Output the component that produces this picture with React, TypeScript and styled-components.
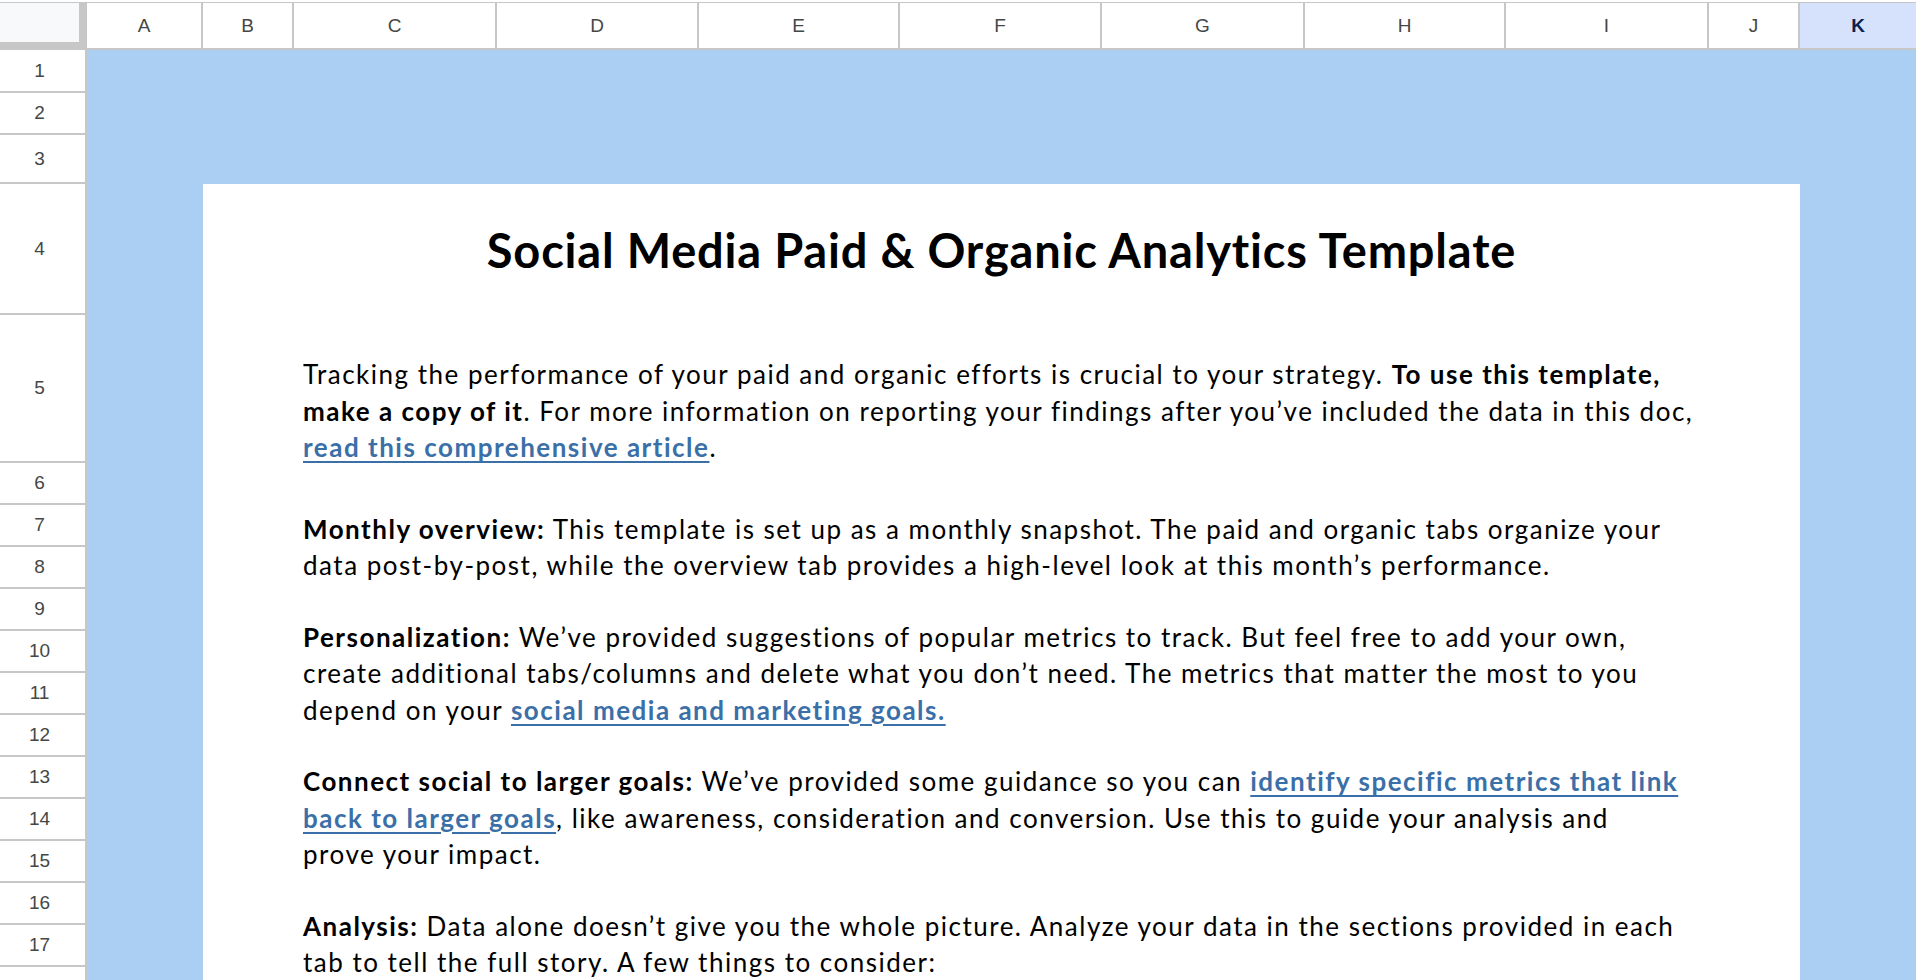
import React from "react"
import styled, { createGlobalStyle } from "styled-components"

type Column = { label: string; width: number; selected?: boolean }

const columns: Column[] = [
  { label: "A", width: 116 },
  { label: "B", width: 91 },
  { label: "C", width: 203 },
  { label: "D", width: 202 },
  { label: "E", width: 201 },
  { label: "F", width: 202 },
  { label: "G", width: 203 },
  { label: "H", width: 201 },
  { label: "I", width: 203 },
  { label: "J", width: 91 },
  { label: "K", width: 116, selected: true },
]

const rowHeights = [43, 42, 49, 131, 148, 42, 42, 42, 42, 42, 42, 42, 42, 42, 42, 42, 42, 42]

const App: React.FC = () => {
  return (
    <>
      <GlobalStyle />
      <Page>
        <HeaderRow>
          <Corner />
          {columns.map((col) => (
            <ColHeader key={col.label} $width={col.width} $selected={col.selected}>
              {col.label}
            </ColHeader>
          ))}
        </HeaderRow>
        <Body>
          <RowHeaders>
            {rowHeights.map((h, i) => (
              <RowHeader key={i} $height={h}>
                {i + 1}
              </RowHeader>
            ))}
          </RowHeaders>
          <Canvas>
            <Card>
              <Title>Social Media Paid &amp; Organic Analytics Template</Title>
              <Para $gap={41}>
                Tracking the performance of your paid and organic efforts is crucial to your strategy.{" "}
                <b>To use this template,</b>
                <br />
                <b>make a copy of it</b>. For more information on reporting your findings after you’ve included the data in this doc,
                <br />
                <Link href="#">read this comprehensive article</Link>.
              </Para>
              <Para $gap={45}>
                <b>Monthly overview:</b> This template is set up as a monthly snapshot. The paid and organic tabs organize your
                <br />
                data post-by-post, while the overview tab provides a high-level look at this month’s performance.
              </Para>
              <Para $gap={35}>
                <b>Personalization:</b> We’ve provided suggestions of popular metrics to track. But feel free to add your own,
                <br />
                create additional tabs/columns and delete what you don’t need. The metrics that matter the most to you
                <br />
                depend on your <Link href="#">social media and marketing goals.</Link>
              </Para>
              <Para $gap={35}>
                <b>Connect social to larger goals:</b> We’ve provided some guidance so you can{" "}
                <Link href="#">identify specific metrics that link</Link>
                <br />
                <Link href="#">back to larger goals</Link>, like awareness, consideration and conversion. Use this to guide your analysis and
                <br />
                prove your impact.
              </Para>
              <Para $gap={35}>
                <b>Analysis:</b> Data alone doesn’t give you the whole picture. Analyze your data in the sections provided in each
                <br />
                tab to tell the full story. A few things to consider:
              </Para>
            </Card>
          </Canvas>
        </Body>
      </Page>
    </>
  )
}

const GlobalStyle = createGlobalStyle`
  html, body {
    margin: 0;
    padding: 0;
    background: #ffffff;
    overflow: hidden;
  }
  * {
    box-sizing: border-box;
  }
`

const Page = styled.div`
  width: 1916px;
  height: 980px;
  display: flex;
  flex-direction: column;
  overflow: hidden;
  padding-top: 2px;
  font-family: "Liberation Sans", Arial, sans-serif;
`

const HeaderRow = styled.div`
  display: flex;
  height: 48px;
  flex-shrink: 0;
`

const Corner = styled.div`
  width: 87px;
  flex-shrink: 0;
  background: #f8f9fa;
  border-top: 1px solid #c7c7c7;
  border-right: 8px solid #c7c7c7;
  border-bottom: 8px solid #c7c7c7;
`

const ColHeader = styled.div<{ $width: number; $selected?: boolean }>`
  width: ${(p) => p.$width}px;
  flex-shrink: 0;
  display: flex;
  align-items: center;
  justify-content: center;
  border-top: 1px solid #c7c7c7;
  border-bottom: 2px solid #c7c7c7;
  border-right: ${(p) => (p.$selected ? "none" : "2px solid #c7c7c7")};
  background: ${(p) => (p.$selected ? "#d6e2fb" : "#ffffff")};
  color: ${(p) => (p.$selected ? "#0b2150" : "#444746")};
  font-weight: ${(p) => (p.$selected ? 700 : 400)};
  font-size: 19px;
  &:last-child {
    flex: 1;
  }
`

const Body = styled.div`
  display: flex;
  flex: 1;
  min-height: 0;
`

const RowHeaders = styled.div`
  width: 87px;
  flex-shrink: 0;
  display: flex;
  flex-direction: column;
  border-right: 2px solid #c7c7c7;
`

const RowHeader = styled.div<{ $height: number }>`
  height: ${(p) => p.$height}px;
  flex-shrink: 0;
  display: flex;
  align-items: center;
  justify-content: center;
  padding-right: 6px;
  border-bottom: 2px solid #c7c7c7;
  color: #444746;
  font-size: 19px;
`

const Canvas = styled.div`
  flex: 1;
  background: #abcff3;
  padding: 134px 116px 0 116px;
  min-height: 0;
`

const Card = styled.div`
  background: #ffffff;
  height: 100%;
  padding: 0 100px;
  font-family: Lato, "Open Sans", sans-serif;
  color: #000000;
`

const Title = styled.h1`
  margin: 0;
  height: 131px;
  display: flex;
  align-items: center;
  justify-content: center;
  font-size: 47px;
  font-weight: 700;
  letter-spacing: 0.8px;
  white-space: nowrap;
`

const Para = styled.p<{ $gap: number }>`
  margin: ${(p) => p.$gap}px 0 0 0;
  font-size: 26px;
  letter-spacing: 1.5px;
  line-height: 36.5px;
  white-space: nowrap;
  b {
    font-weight: 700;
  }
`

const Link = styled.a`
  color: #3b6fa8;
  font-weight: 700;
  text-decoration: underline;
  text-decoration-thickness: 2px;
  text-underline-offset: 4px;
`

export default App
